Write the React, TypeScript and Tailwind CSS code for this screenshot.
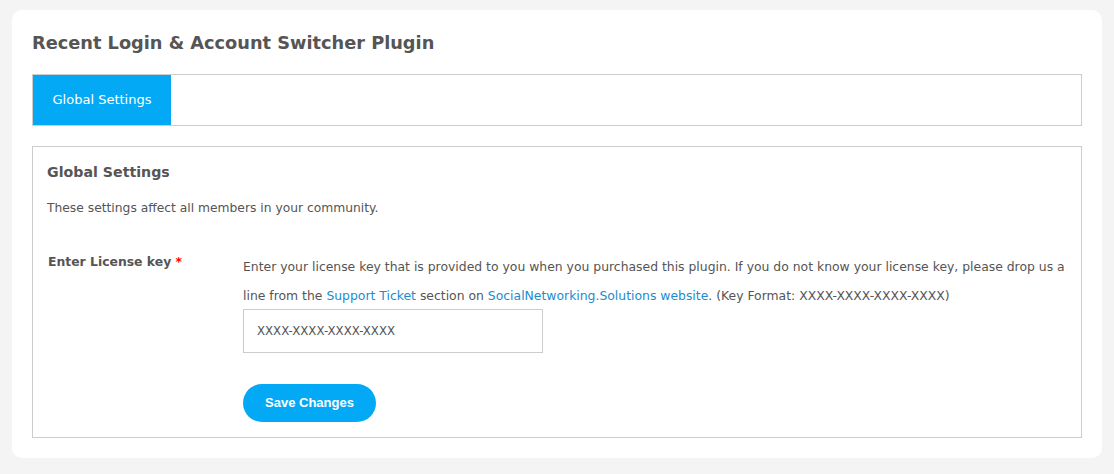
import React from 'react';

const font = { fontFamily: '"DejaVu Sans", Verdana, sans-serif' };

export default function App() {
    return (
        <div className="min-h-screen bg-[#f4f4f4] px-3 pt-2.5 pb-4" style={font}>
            <div className="rounded-[10px] bg-white px-5 pt-[21px] pb-5">
                <h1 className="text-[17.75px] font-bold leading-[24px] text-[#555]">
                    Recent Login &amp; Account Switcher Plugin
                </h1>

                {/* Tabs */}
                <div className="mt-[19px] flex h-[52px] border border-[#ccc]">
                    <button className="h-full w-[138px] bg-[#03a9f4] text-[13px] text-white">
                        Global Settings
                    </button>
                </div>

                {/* Settings panel */}
                <div className="mt-5 border border-[#ccc] px-[14px] pt-[13px] pb-[15px] text-[#555]">
                    <h2 className="text-[14.2px] font-bold leading-[24px]">Global Settings</h2>
                    <p className="mt-[14px] text-[12.3px] leading-[20px]">
                        These settings affect all members in your community.
                    </p>

                    <div className="mt-[34px] flex">
                        <label className="w-[196px] shrink-0 pl-px text-[12.4px] font-bold leading-[20px]">
                            Enter License key <span className="text-[#ff0000]">*</span>
                        </label>
                        <div className="flex-1">
                            <p className="text-[12.4px] leading-[29px]">
                                Enter your license key that is provided to you when you purchased this plugin. If you do not know your license key, please drop us a line from the{' '}
                                <a href="#" className="text-[#1a8ccf]">Support Ticket</a> section on{' '}
                                <a href="#" className="text-[#1a8ccf]">SocialNetworking.Solutions website</a>. (Key Format: XXXX-XXXX-XXXX-XXXX)
                            </p>
                            <input
                                type="text"
                                placeholder="XXXX-XXXX-XXXX-XXXX"
                                className="-mt-px block h-[44px] w-[300px] border border-[#ccc] px-[13px] text-[11.75px] text-[#555] outline-none placeholder:text-[#555]"
                            />
                            <button
                                className="mt-[31px] h-[38px] w-[133px] rounded-full bg-[#03a9f4] text-[13px] font-bold text-white"
                                style={{ fontFamily: '"Liberation Sans", Arial, sans-serif' }}
                            >
                                Save Changes
                            </button>
                        </div>
                    </div>
                </div>
            </div>
        </div>
    );
}
